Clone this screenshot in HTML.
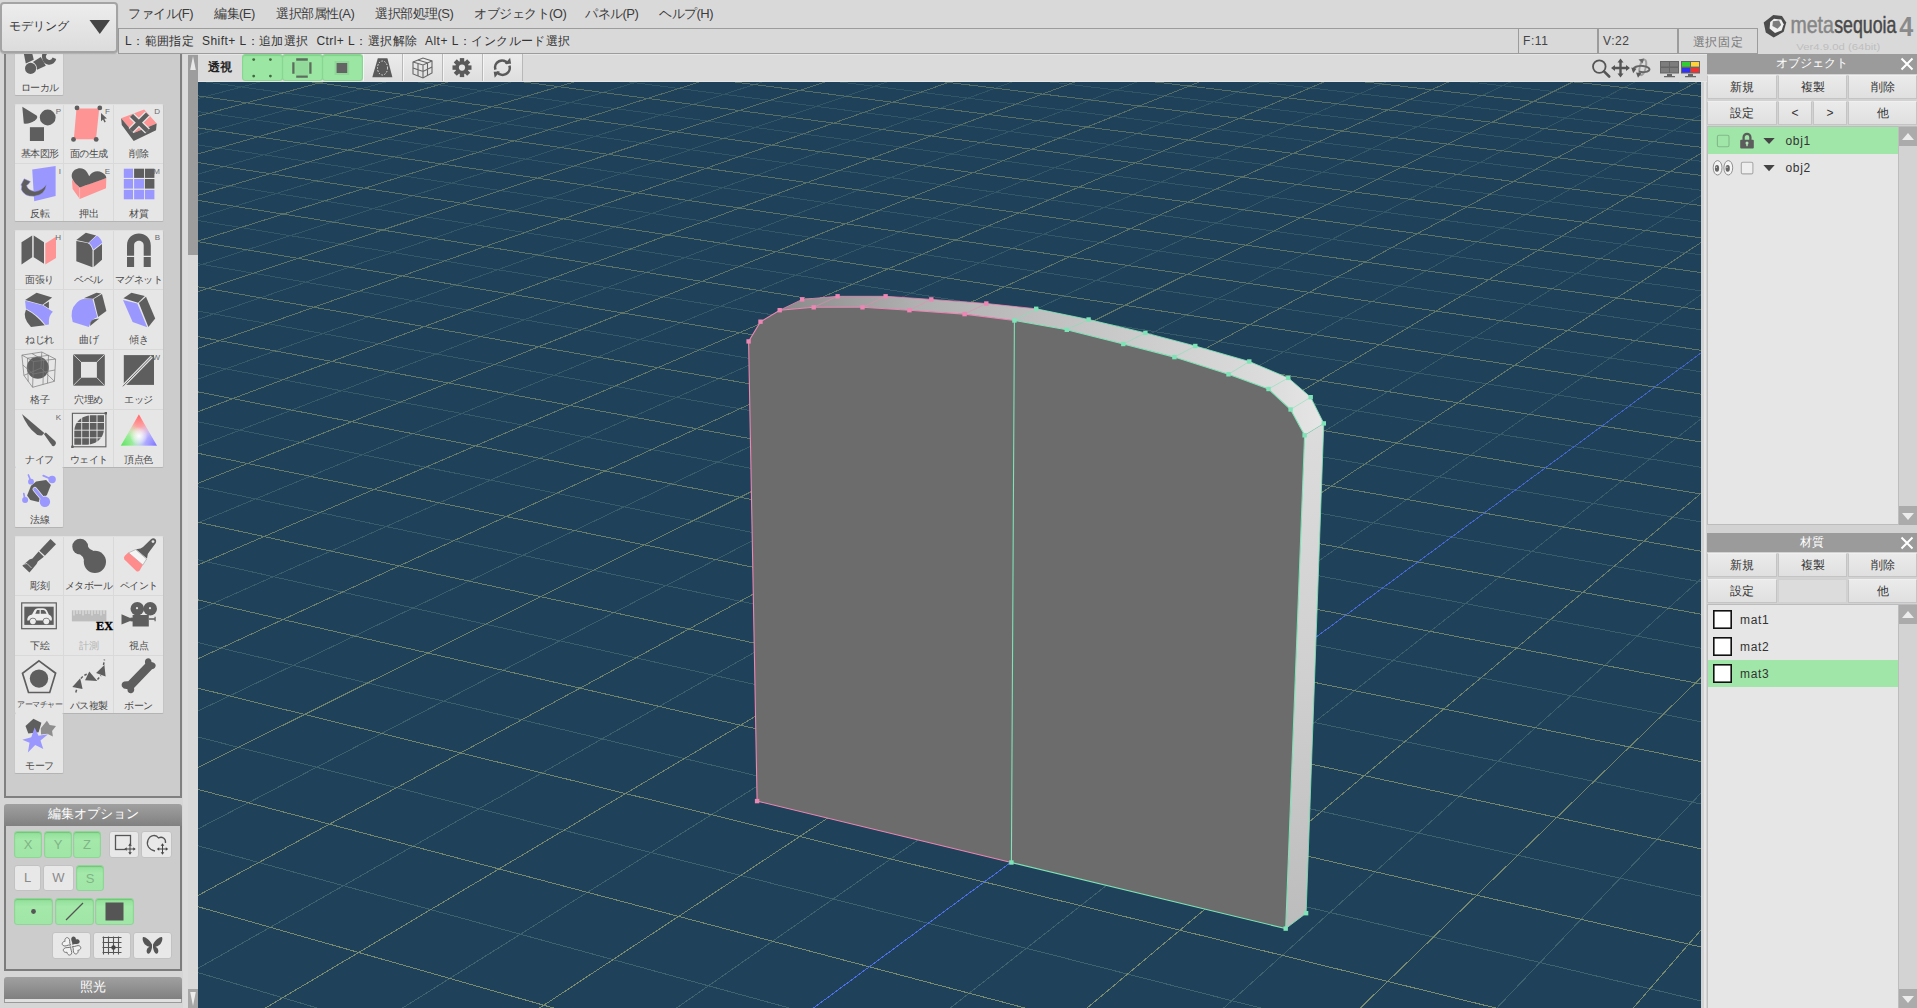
<!DOCTYPE html>
<html lang="ja">
<head>
<meta charset="utf-8">
<title>metasequoia4</title>
<style>
*{box-sizing:border-box;margin:0;padding:0}
html,body{width:1917px;height:1008px;overflow:hidden;background:#d4d4d4;font-family:"Liberation Sans",sans-serif;color:#333}
.a{position:absolute}
#top{left:0;top:0;width:1917px;height:54px;background:#d9d9d9}
#menu{left:117px;top:0;height:28px;width:1640px;font-size:13px;color:#3c3c3c}
#menu span{position:absolute;top:5px;white-space:nowrap;letter-spacing:-0.5px}
#status{left:118px;top:28px;width:1400px;border-left:1px solid #9c9c9c;height:26px;background:#d9d9d9;border-top:1px solid #9c9c9c;border-bottom:1px solid #9c9c9c;font-size:12px;color:#333}
#status span{position:absolute;left:6px;top:4px;white-space:pre;letter-spacing:0.45px}
.sbox{top:28px;height:26px;background:#d9d9d9;border:1px solid #9c9c9c;font-size:12px;color:#444;padding:5px 0 0 4px;letter-spacing:0.6px}
#mode{left:0;top:2px;width:118px;height:51px;border-radius:4px;background:linear-gradient(#ededed,#dcdcdc);border:2px solid #a4a4a4;box-shadow:0 1px 1px rgba(0,0,0,.2);font-size:12px;color:#333}
#left{left:0;top:53px;width:198px;height:955px;background:#d6d6d6;overflow:hidden}
.grp{background:#e6e6e6;border:1px solid #c4c4c4;border-top-color:#e0e0e0;border-left-color:#c8c8c8;border-bottom-color:#b4b4b4;border-radius:2px}
.tb{position:absolute;width:49px;height:60px;font-size:10px;color:#4a4a4a;text-align:center}
.tb .l{position:absolute;left:-6px;right:-6px;top:43px;white-space:nowrap;letter-spacing:-0.5px}
.tb .k{position:absolute;right:3px;top:3px;font-size:8px;color:#6a6a6a}
.tb svg{position:absolute;left:6px;top:1px;width:38px;height:38px;overflow:visible}
.vsep{position:absolute;width:1px;background:#d9d9d9}
.phead{height:22px;border-radius:3px 3px 0 0;background:linear-gradient(#a0a0a0,#929292 45%,#808080);color:#fff;font-size:13px;text-align:center;line-height:20px}
.gb{position:absolute;height:27px;border-radius:3px;background:linear-gradient(#90e098,#a4e8aa 30%,#a0e6a6);border:1px solid #8fd596;box-shadow:inset 0 1px 1px rgba(0,80,0,.2);color:#7fb486;font-size:13px;text-align:center;line-height:26px}
.wb{position:absolute;height:27px;border-radius:3px;background:#e8e8e8;border:1px solid #c2c2c2;color:#8a8a8a;font-size:13px;text-align:center;line-height:24px}
#vbar{left:198px;top:54px;width:1509px;height:28px;background:#dbdbdb;border-top:1px solid #e6e6e6;border-bottom:1px solid #e6e6e6}
.vb{position:absolute;top:-1px;width:40px;height:27px;background:linear-gradient(#ececec,#dedede);border-left:1px solid #f4f4f4;border-right:1px solid #b8b8b8}
.vbg{position:absolute;top:-1px;width:40.500px;height:27px;background:#9ae6a2;border:1px solid #88d692;border-radius:3px;box-shadow:inset 0 1px 1px #80d28a}
#view{left:198px;top:82px;width:1503px;height:926px;background:#1f4159;overflow:hidden}
#right{left:1701px;top:53px;width:216px;height:955px;background:#d2d2d2}
.rhead{left:1707px;width:210px;height:20px;background:#9b9b9b;color:#fff;font-size:12px;text-align:center;line-height:19px}
.rb{position:absolute;height:24px;background:linear-gradient(#ebebeb,#e0e0e0);border:1px solid #c4c4c4;border-top-color:#f0f0f0;font-size:12px;color:#333;text-align:center;line-height:22px}
.list{left:1707px;width:191px;background:#e6e6e6;border-left:1px solid #bcbcbc;border-top:1px solid #bcbcbc}
.sel{background:#a0e6a8}
.sbar{left:1898px;width:19px;background:#d3d3d3;border-left:1px solid #bdbdbd}
.sarr{position:absolute;left:0;width:18px;height:19px;background:#ababab}
.row{position:absolute;left:1px;width:189px;height:27px;font-size:12px;color:#333}
</style>
</head>
<body>
<div id="left" class="a">
<div class="a" style="left:4px;top:0;width:178px;height:745px;background:#cccccc;border:2px solid #808080;border-top:none"></div>
<div class="a grp" style="left:14px;top:-20px;width:50px;height:63px"></div>
<div class="tb" style="left:15px;top:-17px"><svg viewBox="0 0 38 38"><g fill="#5e5e5e"><path d="M2.300 14L10.700 14L12.750 22.800L4.800 26.600Z"/><circle cx="9.600" cy="31.400" r="5.600"/><path d="M11.900 24.900L19.800 19.900L24.800 28.700L16.100 32.800Q16.300 27.500 11.900 24.900Z"/><path d="M28.200 20.700m-7.100 0a7.100 7.100 0 0 0 14.100 1.200l-3.600 -1.400a3.400 3.400 0 1 1 -2.300 -4.300l1.300 -3.500a7.100 7.100 0 0 0 -9.500 8z"/></g></svg><span class="l" style="top:44.500px">ローカル</span></div>
<div class="a grp" style="left:14px;top:51px;width:150px;height:118px"></div><div class="vsep" style="left:63px;top:52px;height:116px"></div><div class="vsep" style="left:113px;top:52px;height:116px"></div><div class="vsep" style="left:15px;top:110px;width:148px;height:1px"></div>
<div class="tb" style="left:15px;top:51px"><svg viewBox="0 0 38 38"><g fill="#5e5e5e"><path d="M1.300 1.800L15.600 10.600Q17.400 12.600 14.200 15.300Q9 19.200 2.800 18.600Z"/><circle cx="26.700" cy="12.500" r="7.900"/><rect x="8.900" y="22.200" width="14.100" height="13.800"/></g></svg><span class="k">P</span><span class="l">基本図形</span></div>
<div class="tb" style="left:64px;top:51px"><svg viewBox="0 0 38 38"><path d="M6.500 3.600L29.200 3.600L26 34.200L3.800 34.200Z" fill="#ff9494"/><g fill="#5e5e5e"><circle cx="7" cy="2.900" r="2.400"/><circle cx="29.800" cy="2.900" r="2.400"/><circle cx="3.500" cy="34.400" r="2.400"/><circle cx="26.200" cy="34.400" r="2.400"/><path d="M31 8l0 8.200l2 -1.800l1.500 3l1.300 -0.700l-1.500 -2.900l2.600 -0.300z"/></g></svg><span class="k">F</span><span class="l">面の生成</span></div>
<div class="tb" style="left:114px;top:51px"><svg viewBox="0 0 38 38"><path d="M1.100 13.300L24.100 4.500L36.700 18.400L13.700 27.900Z" fill="#ff9494"/><path d="M1.100 13.300L13.700 27.900L36.700 18.400L36 25.200L13.700 35.900L1.800 20Z" fill="#5e5e5e"/><g stroke="#e5e5e5" stroke-width="6.800" stroke-linecap="butt"><path d="M11.500 10.500L27.500 26M27.500 9L11 25.500"/></g><g stroke="#5e5e5e" stroke-width="4.400"><path d="M11.500 10.500L27.500 26M27.500 9L11 25.500"/></g></svg><span class="k">D</span><span class="l">削除</span></div>
<div class="tb" style="left:15px;top:111px"><svg viewBox="0 0 38 38"><path d="M11.200 4.500L34.600 1L34.600 31.100L13.200 36.300Z" fill="#9a98ff"/><path d="M25.500 19.200Q24.500 30 13 31.300Q3 31.500 0.300 24.500L0.800 20.800L-0.200 20.200L3.200 13.800L9.400 16.600L7.600 19L5.600 20.600Q7 25.500 13.600 26.400Q21 26 25.500 19.200Z" fill="#5e5e5e" stroke="#9a98ff" stroke-width="0.500"/></svg><span class="k">I</span><span class="l">反転</span></div>
<div class="tb" style="left:64px;top:111px"><svg viewBox="0 0 38 38"><path d="M1.900 14.500L9.500 22.500L36.300 13L36 23.200L9.800 33.900L2.600 24Z" fill="#ff9494"/><path d="M9.600 22.600V33.600" stroke="#ffd0d0" stroke-width="0.600"/><path d="M9.800 22.400C4 17.500 1 13.500 1.800 9.500C3 4 9.500 2 14 4.200C16.500 5.500 18 8.500 19.200 11.200C21.500 6.500 27.500 5.200 31.500 7.200C34.500 8.800 36.300 10.500 36.300 13C28 16 17 20 9.800 22.400Z" fill="#5e5e5e"/></svg><span class="k">E</span><span class="l">押出</span></div>
<div class="tb" style="left:114px;top:111px"><svg viewBox="0 0 38 38"><g fill="#9a98ff"><rect x="3.800" y="3.700" width="9.200" height="9.200"/><rect x="3.800" y="14" width="9.200" height="9.600"/><rect x="14.100" y="14" width="9.900" height="9.600"/><rect x="3.800" y="24.800" width="9.200" height="9.500"/><rect x="14.100" y="24.800" width="9.900" height="9.500"/><rect x="24.900" y="24.800" width="9.500" height="9.500"/></g><g fill="#5e5e5e"><rect x="14.100" y="3.700" width="9.900" height="9.200"/><rect x="24.900" y="3.700" width="9.500" height="9.200"/><rect x="24.900" y="14" width="9.500" height="9.600"/></g></svg><span class="k">M</span><span class="l">材質</span></div>
<div class="a grp" style="left:14px;top:177px;width:150px;height:238px"></div><div class="a grp" style="left:14px;top:414px;width:50px;height:61px;border-top:none"></div><div class="vsep" style="left:63px;top:178px;height:236px"></div><div class="vsep" style="left:113px;top:178px;height:236px"></div><div class="vsep" style="left:15px;top:236px;width:148px;height:1px"></div><div class="vsep" style="left:15px;top:296px;width:148px;height:1px"></div><div class="vsep" style="left:15px;top:356px;width:148px;height:1px"></div>
<div class="tb" style="left:15px;top:177px"><svg viewBox="0 0 38 38"><path d="M0.500 11.300L11.200 4.500L11.200 26.300L0.500 33.500Z" fill="#5e5e5e"/><path d="M12.700 4.500L23 11.300L23 32.700L12.700 26.300Z" fill="#5e5e5e"/><path d="M24.300 12.500L35 5.700L35 27.100L24.300 33.500Z" fill="#ff9494"/></svg><span class="k">H</span><span class="l">面張り</span></div>
<div class="tb" style="left:64px;top:177px"><svg viewBox="0 0 38 38"><path d="M6.300 8.900L15.800 1.800L26.100 4.500L18.500 11.700Z" fill="#5e5e5e"/><path d="M26.900 4.700Q31 7 32.200 11.700L23.500 18.500Q22 13.800 18.900 11.700Z" fill="#9a98ff"/><path d="M6.300 10.100L17.400 12.100Q21.500 14.500 22.500 19.200L22.500 36.300L6.300 30.300Z" fill="#5e5e5e"/><path d="M23.700 19.600L32 12.900L32 28.700L23.700 35.900Z" fill="#5e5e5e"/></svg><span class="l">ベベル</span></div>
<div class="tb" style="left:114px;top:177px"><svg viewBox="0 0 38 38"><path d="M7 24.800V14.500C7 -1.400 30.800 -1.400 30.800 14.500V24.800H23.700V14.500C23.700 8.300 14.100 8.300 14.100 14.500V24.800Z" fill="#5e5e5e"/><path d="M7 26.100H14.100V35.900H7ZM23.700 26.100H30.800V35.900H23.700Z" fill="#5e5e5e"/></svg><span class="k">B</span><span class="l">マグネット</span></div>
<div class="tb" style="left:15px;top:237px"><svg viewBox="0 0 38 38"><path d="M4.100 8.900L15.600 1.800L31.100 6.500L21.500 13.700Z" fill="#5e5e5e"/><path d="M22.300 14L27.900 10.500L27.900 17.600Z" fill="#5e5e5e"/><path d="M4.100 9.700L21.500 14.200L31.900 20.800Q27 25 27.900 33.500L24.700 33.900Q17 24 4.900 17.600Z" fill="#9a98ff"/><path d="M5 18.500Q15.500 24 23.800 34.300L10 35.900Q1 27 5 18.500Z" fill="#5e5e5e"/></svg><span class="l">ねじれ</span></div>
<div class="tb" style="left:64px;top:237px"><svg viewBox="0 0 38 38"><path d="M13 8.100L22.500 8.100L27.300 26.300Q21 28 18.900 35.900L2.700 31.100Q-1 19 7 11.500Q9.500 9 13 8.100Z" fill="#9a98ff"/><path d="M13.800 7.300L26.500 1.800L31.200 2.600L22.900 7.700Z" fill="#5e5e5e"/><path d="M23.700 8.100L32 2.900L36.400 20L28.100 25.900Z" fill="#5e5e5e"/><path d="M20.300 31.800Q21.500 29 24.100 28.300L29.200 27.500L20.100 35.100Z" fill="#5e5e5e"/></svg><span class="l">曲げ</span></div>
<div class="tb" style="left:114px;top:237px"><svg viewBox="0 0 38 38"><path d="M3 8.900L17.300 12.500L27.200 36.300L12.600 31.100Z" fill="#9a98ff"/><path d="M3.400 7.300L11.400 1.800L24.800 4.900L18.100 11.700Z" fill="#5e5e5e"/><path d="M18.900 12.100L26 5.700L35.200 27.500L28.400 35.900Z" fill="#5e5e5e"/></svg><span class="l">傾き</span></div>
<div class="tb" style="left:15px;top:297px"><svg viewBox="0 0 38 38"><circle cx="16.800" cy="16.800" r="11" fill="#5e5e5e"/><g fill="none" stroke="#7a7a7a" stroke-width="0.700"><path d="M0.900 4.100L20.800 1L34.600 8.100L33.400 30.300L11.600 36.300L2.900 24.400Z"/><path d="M0.900 4.100L12.500 10.500L11.600 36.300M12.500 10.500L34.600 8.100M6.500 7.200L27.500 4.300M27.500 4.300L26.500 32.200M6.500 7.200L7.200 30.500M1.900 14L12 23L34 19M22.500 9.400L22 33.500M11 2.600L23 9.300M2.900 24.400L20 17L33.400 30.300M20.800 1L20 17"/></g></svg><span class="l">格子</span></div>
<div class="tb" style="left:64px;top:297px"><svg viewBox="0 0 38 38"><rect x="3.100" y="3.300" width="31.700" height="31.400" fill="#5e5e5e"/><rect x="11" y="10.900" width="15.900" height="15.800" fill="#e5e5e5"/><path d="M3.100 3.300L11 10.900M34.800 3.300L26.900 10.900M3.100 34.700L11 26.700M34.800 34.700L26.900 26.700" stroke="#e5e5e5" stroke-width="0.800"/></svg><span class="l">穴埋め</span></div>
<div class="tb" style="left:114px;top:297px"><svg viewBox="0 0 38 38"><rect x="3.800" y="4.100" width="30.200" height="29.800" fill="#5e5e5e"/><path d="M2.900 35.300L31.800 5.600" stroke="#e5e5e5" stroke-width="3"/><path d="M2.900 35.300L31.800 5.600" stroke="#5e5e5e" stroke-width="0.900"/></svg><span class="k">W</span><span class="l">エッジ</span></div>
<div class="tb" style="left:15px;top:357px"><svg viewBox="0 0 38 38"><path d="M0.900 2.900L23.300 22L21 24.500Q18 25 15.500 23.300Q6 16 0.900 2.900Z" fill="#5e5e5e"/><path d="M22.900 23L24.800 21.500L33.800 29.800Q36 32 34 34.300Q32.500 35.800 30.800 34.600Q30.500 33.200 29.300 32.300Z" fill="#5e5e5e"/></svg><span class="k">K</span><span class="l">ナイフ</span></div>
<div class="tb" style="left:64px;top:357px"><svg viewBox="0 0 38 38"><rect x="2.400" y="2.300" width="33.500" height="33.500" fill="none" stroke="#5e5e5e" stroke-width="1.100"/><path d="M4.300 33.800V21C4.300 9 14 4.300 22 4.300H34V17C34 29 24 33.800 16 33.800Z" fill="#5e5e5e"/><path d="M11.700 3V35M19.400 3V35M27 3V35M3 11.500H35M3 19.200H35M3 26.800H35" stroke="#e5e5e5" stroke-width="0.900"/><rect x="34.600" y="1" width="2.400" height="2.400" fill="#5e5e5e"/><rect x="1.200" y="34.600" width="2.400" height="2.400" fill="#5e5e5e"/></svg><span class="l">ウェイト</span></div>
<div class="tb" style="left:114px;top:357px"><svg viewBox="0 0 38 38"><defs><radialGradient id="vw" gradientUnits="userSpaceOnUse" cx="18.900" cy="25" r="9"><stop offset="0" stop-color="#fff" stop-opacity="0.950"/><stop offset="1" stop-color="#fff" stop-opacity="0"/></radialGradient><radialGradient id="vr" gradientUnits="userSpaceOnUse" cx="18.900" cy="4" r="26"><stop offset="0" stop-color="#ff6a6a"/><stop offset="0.45" stop-color="#ff8a8a" stop-opacity="0.800"/><stop offset="1" stop-color="#ffb0b0" stop-opacity="0"/></radialGradient><radialGradient id="vg" gradientUnits="userSpaceOnUse" cx="1" cy="34.500" r="26"><stop offset="0" stop-color="#5ae05a"/><stop offset="0.45" stop-color="#80e880" stop-opacity="0.800"/><stop offset="1" stop-color="#b0ffb0" stop-opacity="0"/></radialGradient><radialGradient id="vbl" gradientUnits="userSpaceOnUse" cx="37" cy="34.500" r="26"><stop offset="0" stop-color="#7a70ff"/><stop offset="0.45" stop-color="#9a94ff" stop-opacity="0.800"/><stop offset="1" stop-color="#c0c0ff" stop-opacity="0"/></radialGradient></defs><path d="M18.900 3.300L37.100 34.700L0.700 34.700Z" fill="#fff"/><path d="M18.900 3.300L37.100 34.700L0.700 34.700Z" fill="url(#vr)"/><path d="M18.900 3.300L37.100 34.700L0.700 34.700Z" fill="url(#vg)"/><path d="M18.900 3.300L37.100 34.700L0.700 34.700Z" fill="url(#vbl)"/><path d="M18.900 3.300L37.100 34.700L0.700 34.700Z" fill="url(#vw)"/></svg><span class="l">頂点色</span></div>
<div class="tb" style="left:15px;top:417px"><svg viewBox="0 0 38 38"><path d="M15.200 10.500L25.100 8.900L29.900 14L25.900 24L17.600 31.100L9.300 29.100L6.100 24.400L10 14.800Z" fill="#5e5e5e"/><g stroke="#e5e5e5" stroke-width="4.600" stroke-linecap="round"><path d="M13.800 18.200L23.900 30.500"/></g><circle cx="23.900" cy="30.700" r="6" fill="#e5e5e5"/><g stroke="#9a98ff" stroke-linecap="round"><path d="M13.800 18.200L23.900 30.500" stroke-width="3.200"/><path d="M31.100 8.500L22.200 4.600" stroke-width="1.700"/><path d="M10 10.500L7.400 4" stroke-width="1.700"/><path d="M4.100 29.100L2.800 22.600" stroke-width="1.700"/></g><g fill="#9a98ff"><circle cx="23.900" cy="30.700" r="5.200"/><circle cx="31.100" cy="8.500" r="3.700"/><circle cx="10" cy="10.700" r="2.900"/><circle cx="4.100" cy="29.100" r="3"/></g></svg><span class="l">法線</span></div>
<div class="a grp" style="left:14px;top:483px;width:150px;height:178px"></div><div class="a grp" style="left:14px;top:660px;width:50px;height:61px;border-top:none"></div><div class="vsep" style="left:63px;top:484px;height:176px"></div><div class="vsep" style="left:113px;top:484px;height:176px"></div><div class="vsep" style="left:15px;top:542px;width:148px;height:1px"></div><div class="vsep" style="left:15px;top:602px;width:148px;height:1px"></div>
<div class="tb" style="left:15px;top:483px"><svg viewBox="0 0 38 38"><path d="M29.500 1.900L35 7.300L23.900 18.800L18.400 13.700Z" fill="#5e5e5e"/><path d="M17.600 14.600L22.900 19.700L16.800 24.600L15.600 27.100L8.500 35.500L1.300 28.700L8.500 22.400L11.500 21.500Z" fill="#5e5e5e"/><path d="M2.700 27.300L6 26.500L10.500 31" stroke="#e5e5e5" stroke-width="0.700" fill="none"/></svg><span class="l">彫刻</span></div>
<div class="tb" style="left:64px;top:483px"><svg viewBox="0 0 38 38"><circle cx="10.200" cy="9.700" r="7.900" fill="#5e5e5e"/><circle cx="24.900" cy="24.800" r="11.100" fill="#5e5e5e"/><path d="M10.100 17.500Q13.100 19.150 13.970 22.900L23.270 13.800Q19.550 12.850 17.980 9.800Z" fill="#5e5e5e"/></svg><span class="l">メタボール</span></div>
<div class="tb" style="left:114px;top:483px"><svg viewBox="0 0 38 38"><path d="M34.500 1.600Q37 3 35.800 6L29.500 14.500L27.800 17L27 21.500L16 12.200L20.500 11.500L23 10L31 2.300Q32.800 0.800 34.500 1.600Z" fill="#5e5e5e"/><circle cx="33" cy="4.600" r="1.400" fill="#e5e5e5"/><path d="M15.600 12.600L26.600 22L22.800 28L8.500 15.800Z" fill="#f4f4f4" stroke="#8a8a8a" stroke-width="0.500"/><path d="M8.300 15.600L22.800 28L19.500 33.800Q18 35.200 16.500 34.200L4.400 22.500Q3.300 20.500 4.600 19Z" fill="#ff8c8c"/></svg><span class="l">ペイント</span></div>
<div class="tb" style="left:15px;top:543px"><svg viewBox="0 0 38 38"><rect x="0.700" y="5.900" width="34.600" height="25.800" fill="none" stroke="#5e5e5e" stroke-width="1.200"/><rect x="3.300" y="9.700" width="29.400" height="18.200" fill="#5e5e5e"/><path d="M6.200 23.500Q6 18.500 11 17.500L13.500 13Q14.500 11.300 17 11.300H22Q24.500 11.300 25.800 13.200L27.800 17.600Q31.500 19 30.800 23.500H28.800A3.600 3.600 0 0 0 21.800 23.500H15.400A3.600 3.600 0 0 0 8.400 23.500Z" fill="#ececec"/><circle cx="11.900" cy="24.300" r="2.900" fill="#ececec"/><circle cx="25.300" cy="24.300" r="2.900" fill="#ececec"/><path d="M14.300 16.800L16 13H18.600V16.800ZM19.800 13H22.500Q23.800 13.200 24.500 14.500L25.500 16.800H19.800Z" fill="#5e5e5e"/></svg><span class="l">下絵</span></div>
<div class="tb" style="left:64px;top:543px;color:#b4b4b4"><svg viewBox="0 0 38 38"><rect x="1.900" y="13.300" width="34.500" height="11.100" fill="#bdbdbd"/><path d="M4 13.300V18.500M7 13.300V17M10 13.300V17M13 13.300V18.500M16 13.300V17M19 13.300V17M22 13.300V18.500M25 13.300V17M28 13.300V17M31 13.300V18.500M34 13.300V17" stroke="#e4e4e4" stroke-width="1.100"/><text x="26" y="32.600" font-family="Liberation Serif, serif" font-weight="bold" font-size="13.500" fill="#000" textLength="17" lengthAdjust="spacingAndGlyphs" stroke="#000" stroke-width="0.400">EX</text></svg><span class="l">計測</span></div>
<div class="tb" style="left:114px;top:543px"><svg viewBox="0 0 38 38"><g fill="#5e5e5e"><circle cx="17.300" cy="11.700" r="6.800"/><circle cx="30.200" cy="11.700" r="6.800"/><rect x="12.600" y="18" width="16.200" height="11.500"/><path d="M1.500 17.200L11.400 21.500V23.500L1.500 27.500Z"/><rect x="10.500" y="20.600" width="3" height="3.800"/><path d="M28.800 21.300H34.500V19.800H35.700V24.300H34.500V22.800H28.800Z"/></g><circle cx="17" cy="11.200" r="1.100" fill="#e5e5e5"/><circle cx="30" cy="11.200" r="1.100" fill="#e5e5e5"/></svg><span class="l">視点</span></div>
<div class="tb" style="left:15px;top:603px;font-size:8px"><svg viewBox="0 0 38 38"><path d="M18 3.900L34.600 16.200L28.700 35.500L7.500 35.500L1.500 16.200Z" fill="none" stroke="#5e5e5e" stroke-width="1.700"/><circle cx="18" cy="21.600" r="9.200" fill="#5e5e5e"/></svg><span class="l">アーマチャー</span></div>
<div class="tb" style="left:64px;top:603px"><svg viewBox="0 0 38 38"><g fill="#5e5e5e"><path d="M2.300 29.900L10.200 21.200L12.600 31.900Z"/><path d="M15 23.200L19.300 14.400L27.300 24Z"/><path d="M26.100 16L34.400 8.100L35.600 19.600Z"/></g><path d="M5.800 35.500Q7 31 8.500 28M11 21.500Q14 17.500 18.500 17M27.500 22.500L31 18.500M33.500 8L34.500 2.500" stroke="#5e5e5e" stroke-width="1.500" stroke-dasharray="2.600 2" fill="none"/></svg><span class="l">パス複製</span></div>
<div class="tb" style="left:114px;top:603px"><svg viewBox="0 0 38 38"><path d="M8.200 24.200L25.200 6.800Q24.200 3 27 1.600Q29.800 0.500 31.200 3.200L31.500 5Q35.500 5.500 35.700 8.500Q35.600 11.500 32 12.200L14 31Q15 34.500 12 36Q9 37 7.800 34.500L7.300 32Q3.500 32.300 1.900 29.500Q0.800 26 4.200 24.600Q6.300 24 8.200 24.200Z" fill="#5e5e5e"/></svg><span class="l">ボーン</span></div>
<div class="tb" style="left:15px;top:663px"><svg viewBox="0 0 38 38"><path d="M12.400 1.800L20.400 5.700L17.600 15.200L7.300 16.400L4.500 8.900Z" fill="#5e5e5e"/><path d="M25.900 3.700L28.700 8.100L35 8.900L31.100 14L31.900 19.600L26.300 16.800L20 17.500L19.800 11.200Z" fill="#8e8e8e"/><path d="M13.600 10.500L17.500 18.800L27.100 17.200L19.500 23.500L22.300 31.900L14.200 28L6.900 35.500L8.500 25.800L1.300 22.800L10.300 20.200Z" fill="#9a98ff"/></svg><span class="l">モーフ</span></div>
<div class="a" style="left:183px;top:0;width:5px;height:955px;background:#dcdcdc"></div>
<div class="a" style="left:188px;top:0;width:10px;height:955px;background:#d9d9d9"></div>
<div class="a" style="left:188px;top:2px;width:10px;height:200px;background:#9d9d9d"></div>
<svg class="a" style="left:188px;top:2px" width="10" height="16" viewBox="0 0 10 16"><path d="M5 1L7.800 15H2.200Z" fill="#e8e8e8"/></svg>
<div class="a" style="left:188px;top:936px;width:10px;height:19px;background:#a6a6a6"></div>
<svg class="a" style="left:188px;top:938px" width="10" height="16" viewBox="0 0 10 16"><path d="M2.200 1H7.800L5 15Z" fill="#ececec"/></svg>
<div class="a phead" style="left:4px;top:751px;width:178px">編集オプション</div>
<div class="a" style="left:4px;top:773px;width:178px;height:145px;background:#cccccc;border:2px solid #7c7c7c;border-top:none"></div>
<div class="gb" style="left:14px;top:778px;width:28px;height:27px">X</div><div class="gb" style="left:44px;top:778px;width:28px;height:27px">Y</div><div class="gb" style="left:73px;top:778px;width:28px;height:27px">Z</div>
<div class="wb" style="left:109px;top:778px;width:30px;height:27px"><svg width="28" height="25" viewBox="0 0 28 25"><rect x="5.500" y="3.500" width="15" height="14" fill="none" stroke="#555" stroke-width="1.300"/><path d="M20 12.500v9M15.500 17h9" stroke="#e8e8e8" stroke-width="3"/><path d="M20 13v8M16 17h8" stroke="#444" stroke-width="1"/><path d="M20 11.300l1.800 2.400h-3.600zM20 22.700l1.800 -2.400h-3.600zM14.300 17l2.400 -1.800v3.600zM25.700 17l-2.400 -1.800v3.600z" fill="#444"/></svg></div><div class="wb" style="left:141px;top:778px;width:31px;height:27px"><svg width="29" height="25" viewBox="0 0 29 25"><path d="M13 19C7 18 4 13 6 8C8 3 14 2 16.500 6C20 4 24 6.500 23.500 11" fill="none" stroke="#555" stroke-width="1.300"/><path d="M20.500 12.500v9M16 17h9" stroke="#e8e8e8" stroke-width="3"/><path d="M20.500 13v8M16.500 17h8" stroke="#444" stroke-width="1"/><path d="M20.500 11.300l1.800 2.400h-3.600zM20.500 22.700l1.800 -2.400h-3.600zM14.800 17l2.400 -1.800v3.600zM26.200 17l-2.400 -1.800v3.600z" fill="#444"/></svg></div>
<div class="wb" style="left:14px;top:812px;width:27px;height:26px">L</div><div class="wb" style="left:43px;top:812px;width:31px;height:26px">W</div><div class="gb" style="left:76px;top:812px;width:28px;height:26px">S</div>
<div class="gb" style="left:14px;top:845px;width:39px;height:27px"><svg width="37" height="25" viewBox="0 0 37 25"><circle cx="18.500" cy="12.500" r="2.400" fill="#555"/></svg></div><div class="gb" style="left:55px;top:845px;width:39px;height:27px"><svg width="37" height="25" viewBox="0 0 37 25"><path d="M10 21L27 4" stroke="#555" stroke-width="1.200"/></svg></div><div class="gb" style="left:95px;top:845px;width:39px;height:27px"><svg width="37" height="25" viewBox="0 0 37 25"><rect x="9.500" y="3.500" width="18" height="18" fill="#555"/></svg></div>
<div class="wb" style="left:52px;top:879px;width:39px;height:27px"><svg width="37" height="25" viewBox="0 0 37 25"><g transform="translate(18.500 12.800)"><path d="M0 -1.200C-0.800 -3.800 -4.600 -4.200 -4.600 -7C-4.600 -9.300 -1.500 -10 0 -7.800C1.500 -10 4.600 -9.300 4.600 -7C4.600 -4.200 0.800 -3.800 0 -1.200Z" fill="#555" transform="rotate(35)"/><g fill="#f2f2f2" stroke="#666" stroke-width="0.800"><path d="M0 -1.200C-0.800 -3.800 -4.600 -4.200 -4.600 -7C-4.600 -9.300 -1.500 -10 0 -7.800C1.500 -10 4.600 -9.300 4.600 -7C4.600 -4.200 0.800 -3.800 0 -1.200Z" transform="rotate(125)"/><path d="M0 -1.200C-0.800 -3.800 -4.600 -4.200 -4.600 -7C-4.600 -9.300 -1.500 -10 0 -7.800C1.500 -10 4.600 -9.300 4.600 -7C4.600 -4.200 0.800 -3.800 0 -1.200Z" transform="rotate(215)"/><path d="M0 -1.200C-0.800 -3.800 -4.600 -4.200 -4.600 -7C-4.600 -9.300 -1.500 -10 0 -7.800C1.500 -10 4.600 -9.300 4.600 -7C4.600 -4.200 0.800 -3.800 0 -1.200Z" transform="rotate(305)"/></g></g></svg></div><div class="wb" style="left:93px;top:879px;width:38px;height:27px"><svg width="36" height="25" viewBox="0 0 36 25"><path d="M9.500 3.500v18M14.500 3.500v18M19.500 3.500v18M24.500 3.500v18M8.500 4.500h19M8.500 9.500h19M8.500 14.500h19M8.500 19.500h19" stroke="#555" stroke-width="1.100" fill="none"/><circle cx="19.500" cy="14.500" r="2.200" fill="#444"/></svg></div><div class="wb" style="left:133px;top:879px;width:39px;height:27px"><svg width="37" height="25" viewBox="0 0 37 25"><path d="M18 11.500C15 6 10 3 8.800 4.500C8 7 10 13 15.500 13.800C12 15 11.800 20.500 14.500 20.800C16.500 20.500 17.500 17 18 14.500ZM19 11.500C22 6 27 3 28.200 4.500C29 7 27 13 21.500 13.800C25 15 25.200 20.500 22.500 20.800C20.500 20.500 19.500 17 19 14.500Z" fill="#555"/></svg></div>
<div class="a phead" style="left:4px;top:924px;width:178px">照光</div>
<div class="a" style="left:4px;top:946px;width:178px;height:4px;background:#e0e0e0;border:1px solid #9a9a9a;border-top:none"></div>
</div>
<div id="top" class="a">
 <div id="menu" class="a">
  <span style="left:11px">ファイル(F)</span>
  <span style="left:97px">編集(E)</span>
  <span style="left:159px">選択部属性(A)</span>
  <span style="left:258px">選択部処理(S)</span>
  <span style="left:357px">オブジェクト(O)</span>
  <span style="left:468px">パネル(P)</span>
  <span style="left:542px">ヘルプ(H)</span>
 </div>
 <div id="status" class="a"><span>L：範囲指定  Shift+ L：追加選択  Ctrl+ L：選択解除  Alt+ L：インクルード選択</span></div>
 <div class="a sbox" style="left:1518px;width:80px">F:11</div>
 <div class="a sbox" style="left:1598px;width:80px">V:22</div>
 <div class="a sbox" style="left:1678px;width:80px;color:#777;text-align:center;padding-left:0">選択固定</div>
 <div id="mode" class="a"><span class="a" style="left:7px;top:14px">モデリング</span>
  <svg class="a" style="left:87px;top:15px" width="22" height="16" viewBox="0 0 22 16"><path d="M0.5 1H21L10.8 15Z" fill="#444"/></svg>
 </div>
 <!-- logo -->
 <svg class="a" style="left:1757px;top:0" width="160" height="56" viewBox="0 0 160 56">
  <path d="M16.300 15L25 15.900L29.200 22.500L26.700 31.700L16.700 37.600L8.800 32.600L6.700 22.500Z" fill="#4b4b4b"/>
  <path d="M17 18.800L24.200 19.600L26.700 24.200L24.600 30.500L18 33L12.600 28.400L13.200 22Z" fill="#f0f0f0"/>
  <path d="M15.900 21.300L22.100 20.500L24.200 25L20.500 28.800L15.400 25.900Z" fill="#7c7c7c"/>
  <text x="33.400" y="33.400" font-family="Liberation Sans, sans-serif" font-size="24" fill="#868686" stroke="#868686" stroke-width="0.500" textLength="43.400" lengthAdjust="spacingAndGlyphs">meta</text>
  <text x="77.200" y="33.400" font-family="Liberation Sans, sans-serif" font-size="24" fill="#484848" stroke="#484848" stroke-width="0.500" textLength="62.200" lengthAdjust="spacingAndGlyphs">sequoia</text>
  <text x="142.300" y="35.900" font-family="Liberation Sans, sans-serif" font-size="27.500" font-weight="bold" fill="#8a8a8a" textLength="14" lengthAdjust="spacingAndGlyphs">4</text>
  <text x="39.200" y="50" font-family="Liberation Sans, sans-serif" font-size="9.200" fill="#bebebe" textLength="84" lengthAdjust="spacingAndGlyphs">Ver4.9.0d (64bit)</text>
 </svg>
</div>
<div id="view" class="a">
<svg class="a" style="left:0;top:0" width="1503" height="926" viewBox="0 0 1503 926">
<path d="M0.0 16.6L61.8 0.0M0.0 52.7L187.6 0.0M0.0 92.2L313.2 0.0M0.0 135.7L438.7 -0.0M0.0 183.8L564.0 0.0M0.0 237.3L689.1 0.0M0.0 297.1L814.1 0.0M0.0 364.4L939.0 0.0M0.0 440.8L1063.6 0.0M0.0 528.1L1188.2 0.0M0.0 629.0L1312.5 0.0M0.0 746.9L1436.7 0.0M0.0 886.3L1503.0 32.8M204.5 926.0L1503.0 113.7M478.6 926.0L1503.0 212.7M752.3 926.0L1503.0 336.8M1025.7 926.0L1503.0 496.8M1298.8 926.0L1503.0 711.1M0.0 890.6L119.3 926.0M0.0 763.8L591.4 926.0M0.0 655.0L1062.6 926.0M0.0 560.6L1503.0 918.9M0.0 477.8L1503.0 814.3M0.0 404.8L1503.0 722.0M0.0 339.8L1503.0 639.8M0.0 281.6L1503.0 566.2M-0.0 229.1L1503.0 499.9M0.0 181.7L1503.0 439.9M0.0 138.5L1503.0 385.3M0.0 99.1L1503.0 335.5M0.0 62.9L1503.0 289.7M0.0 29.6L1503.0 247.7M8.1 0.0L1503.0 208.8M219.8 0.0L1503.0 172.8M431.1 0.0L1503.0 139.4M641.9 0.0L1503.0 108.2M852.3 0.0L1503.0 79.2M1062.2 0.0L1503.0 51.9M1271.7 0.0L1503.0 26.4M1480.8 0.0L1503.0 2.5" stroke="#3f636e" stroke-width="1" fill="none" shape-rendering="crispEdges"/>
<path d="M0.0 34.2L124.7 0.0M0.0 72.0L250.4 0.0M0.0 113.4L376.0 0.0M-0.0 159.1L501.4 -0.0M0.0 209.8L626.6 0.0M0.0 266.3L751.7 0.0M0.0 329.7L876.6 0.0M-0.0 401.3L1001.3 0.0M0.0 482.9L1125.9 0.0M0.0 576.7L1250.4 0.0M0.0 685.6L1374.6 0.0M0.0 813.5L1498.8 0.0M67.4 926.0L1503.0 71.3M341.6 926.0L1503.0 160.5M889.1 926.0L1503.0 411.4M1162.3 926.0L1503.0 595.6M1435.2 926.0L1503.0 848.0M0.0 824.7L355.5 926.0M0.0 707.4L827.1 926.0M0.0 606.2L1297.7 926.0M0.0 517.9L1503.0 865.0M0.0 440.2L1503.0 766.8M-0.0 371.3L1503.0 679.7M0.0 309.9L1503.0 602.0M0.0 254.7L1503.0 532.2M0.0 204.8L1503.0 469.2M0.0 159.6L1503.0 412.0M0.0 118.4L1503.0 359.9M0.0 80.6L1503.0 312.1M0.0 45.9L1503.0 268.3M0.0 13.9L1503.0 227.9M114.0 0.0L1503.0 190.5M325.5 0.0L1503.0 155.8M536.5 -0.0L1503.0 123.5M747.2 0.0L1503.0 93.4M957.3 0.0L1503.0 65.3M1167.1 0.0L1503.0 39.0M1376.3 0.0L1503.0 14.3" stroke="#7a8c6e" stroke-width="1" fill="none" shape-rendering="crispEdges"/>
<path d="M615.5 926.0L1503.0 271.0" stroke="#4c6ee6" stroke-width="1" fill="none" shape-rendering="crispEdges"/>
<defs><linearGradient id="fade" x1="0" y1="0" x2="0" y2="1"><stop offset="0" stop-color="#1f4159" stop-opacity="0.42"/><stop offset="0.55" stop-color="#1f4159" stop-opacity="0.18"/><stop offset="1" stop-color="#1f4159" stop-opacity="0"/></linearGradient></defs><rect x="0" y="0" width="1503" height="926" fill="url(#fade)"/>
<defs><linearGradient id="tg" gradientUnits="userSpaceOnUse" x1="582" y1="0" x2="1126" y2="0"><stop offset="0" stop-color="#8a8a8a"/><stop offset="0.25" stop-color="#b0b0b0"/><stop offset="0.6" stop-color="#c8c8c8"/><stop offset="0.9" stop-color="#dcdcdc"/><stop offset="1" stop-color="#e6e6e6"/></linearGradient>
<linearGradient id="sg" gradientUnits="userSpaceOnUse" x1="0" y1="342" x2="0" y2="846"><stop offset="0" stop-color="#dcdcdc"/><stop offset="0.5" stop-color="#d0d0d0"/><stop offset="1" stop-color="#bcbcbc"/></linearGradient></defs>
<polygon points="559.1,719.1 550.6,259.4 562.5,239.7 581.7,228.2 615.7,225.3 664.5,225.3 711.4,228.2 766.6,232.1 816.4,238.5 868.8,247.8 925.3,262.0 976.4,275.1 1030.5,292.3 1070.5,307.0 1092.6,327.5 1106.6,353.3 1087.7,846.6 813.4,780.5" fill="#6c6c6c"/>
<polygon points="581.7,228.2 615.7,225.3 664.5,225.3 711.4,228.2 766.6,232.1 816.4,238.5 868.8,247.8 925.3,262.0 976.4,275.1 1030.5,292.3 1070.5,307.0 1092.6,327.5 1106.6,353.3 1125.8,341.4 1112.7,315.2 1090.3,295.9 1051.3,279.5 997.3,264.0 947.4,250.9 890.6,237.5 838.2,226.8 788.3,221.5 733.3,217.4 687.6,214.3 639.6,214.3 604.2,217.4" fill="url(#tg)"/>
<polygon points="1106.6,353.3 1125.8,341.4 1108.1,831.2 1087.7,846.6" fill="url(#sg)"/>
<path d="M813.4 780.5L559.1 719.1L550.6 259.4L562.5 239.7L581.7 228.2L615.7 225.3L664.5 225.3L711.4 228.2L766.6 232.1L816.4 238.5" stroke="#ec86b2" stroke-width="1.1" fill="none"/>
<path d="M581.7 228.2L604.2 217.4L639.6 214.3L687.6 214.3L733.3 217.4L788.3 221.5L838.2 226.8" stroke="#ec86b2" stroke-width="1" fill="none" opacity="0.8"/>
<path d="M615.7 225.3L639.6 214.3M664.5 225.3L687.6 214.3M711.4 228.2L733.3 217.4M766.6 232.1L788.3 221.5" stroke="#ec86b2" stroke-width="0.8" fill="none" opacity="0.7"/>
<path d="M816.4 238.5L813.4 780.5L1087.7 846.6L1106.6 353.3L1106.6 353.3L1092.6 327.5L1070.5 307.0L1030.5 292.3L976.4 275.1L925.3 262.0L868.8 247.8L816.4 238.5" stroke="#7ee3b6" stroke-width="1.1" fill="none"/>
<path d="M838.2 226.8L890.6 237.5L947.4 250.9L997.3 264.0L1051.3 279.5L1090.3 295.9L1112.7 315.2L1125.8 341.4L1108.1 831.2L1087.7 846.6" stroke="#7ee3b6" stroke-width="1" fill="none" opacity="0.85"/>
<path d="M816.4 238.5L838.2 226.8M868.8 247.8L890.6 237.5M925.3 262.0L947.4 250.9M976.4 275.1L997.3 264.0M1030.5 292.3L1051.3 279.5M1070.5 307.0L1090.3 295.9M1092.6 327.5L1112.7 315.2M1106.6 353.3L1125.8 341.4" stroke="#7ee3b6" stroke-width="0.8" fill="none" opacity="0.7"/>
<rect x="556.9" y="716.9" width="4.4" height="4.4" fill="#ec86b2"/><rect x="548.4" y="257.2" width="4.4" height="4.4" fill="#ec86b2"/><rect x="560.3" y="237.5" width="4.4" height="4.4" fill="#ec86b2"/><rect x="579.5" y="226.0" width="4.4" height="4.4" fill="#ec86b2"/><rect x="613.5" y="223.1" width="4.4" height="4.4" fill="#ec86b2"/><rect x="662.3" y="223.1" width="4.4" height="4.4" fill="#ec86b2"/><rect x="709.2" y="226.0" width="4.4" height="4.4" fill="#ec86b2"/><rect x="764.4" y="229.9" width="4.4" height="4.4" fill="#ec86b2"/><rect x="602.0" y="215.2" width="4.4" height="4.4" fill="#ec86b2"/><rect x="637.4" y="212.1" width="4.4" height="4.4" fill="#ec86b2"/><rect x="685.4" y="212.1" width="4.4" height="4.4" fill="#ec86b2"/><rect x="731.1" y="215.2" width="4.4" height="4.4" fill="#ec86b2"/><rect x="786.1" y="219.3" width="4.4" height="4.4" fill="#ec86b2"/>
<rect x="811.2" y="778.3" width="4.4" height="4.4" fill="#7ee3b6"/><rect x="1085.5" y="844.4" width="4.4" height="4.4" fill="#7ee3b6"/><rect x="1105.9" y="829.0" width="4.4" height="4.4" fill="#7ee3b6"/><rect x="814.2" y="236.3" width="4.4" height="4.4" fill="#7ee3b6"/><rect x="866.6" y="245.6" width="4.4" height="4.4" fill="#7ee3b6"/><rect x="923.1" y="259.8" width="4.4" height="4.4" fill="#7ee3b6"/><rect x="974.2" y="272.9" width="4.4" height="4.4" fill="#7ee3b6"/><rect x="1028.3" y="290.1" width="4.4" height="4.4" fill="#7ee3b6"/><rect x="1068.3" y="304.8" width="4.4" height="4.4" fill="#7ee3b6"/><rect x="1090.4" y="325.3" width="4.4" height="4.4" fill="#7ee3b6"/><rect x="1104.4" y="351.1" width="4.4" height="4.4" fill="#7ee3b6"/><rect x="836.0" y="224.6" width="4.4" height="4.4" fill="#7ee3b6"/><rect x="888.4" y="235.3" width="4.4" height="4.4" fill="#7ee3b6"/><rect x="945.2" y="248.7" width="4.4" height="4.4" fill="#7ee3b6"/><rect x="995.1" y="261.8" width="4.4" height="4.4" fill="#7ee3b6"/><rect x="1049.1" y="277.3" width="4.4" height="4.4" fill="#7ee3b6"/><rect x="1088.1" y="293.7" width="4.4" height="4.4" fill="#7ee3b6"/><rect x="1110.5" y="313.0" width="4.4" height="4.4" fill="#7ee3b6"/><rect x="1123.6" y="339.2" width="4.4" height="4.4" fill="#7ee3b6"/>

</svg></div>
<div id="vbar" class="a">
 <span class="a" style="left:10px;top:4px;font-size:12px;font-weight:bold;color:#222">透視</span>
 <div class="vbg" style="left:44px"><svg width="38" height="25" viewBox="0 0 38 25"><g fill="#43683f"><circle cx="10.700" cy="4.600" r="1.400"/><circle cx="27.400" cy="4.600" r="1.400"/><circle cx="10.700" cy="21.100" r="1.400"/><circle cx="27.400" cy="21.100" r="1.400"/></g></svg></div>
 <div class="vbg" style="left:84px"><svg width="38" height="25" viewBox="0 0 38 25"><rect x="12.300" y="6.200" width="13.200" height="13.800" fill="#92da9a"/><path d="M13.200 4.500h11.600M13.200 21.600h11.600M10.400 7.200v11.600M27.400 7.200v11.600" stroke="#5d6d5d" stroke-width="2.300"/></svg></div>
 <div class="vbg" style="left:124px"><svg width="38" height="25" viewBox="0 0 38 25"><rect x="12.600" y="7" width="12.600" height="12" fill="#646464" stroke="#8fd897" stroke-width="2"/></svg></div>
 <div class="vb" style="left:165px"><svg width="38" height="27" viewBox="0 0 38 27"><path d="M13.800 4.300h9.600l5 18.900H8.300z" fill="#5a5a5a"/><ellipse cx="18.500" cy="14" rx="5" ry="7" fill="none" stroke="#e6e6e6" stroke-width="1" stroke-dasharray="1.500 1.500"/></svg></div>
 <div class="vb" style="left:205px"><svg width="38" height="27" viewBox="0 0 38 27"><g fill="none" stroke="#666" stroke-width="1.100" transform="translate(-1 0)"><path d="M10 8l10 -4l9 3v12l-9 5l-10 -4z"/><path d="M10 8l10 3l9 -4M20 11v13M15 5.900l10 3.200M10 14l10 3.500l9 -4.500M15 9.500v12.500M24.500 9.200v12.300"/></g></svg></div>
 <div class="vb" style="left:245px"><svg width="38" height="27" viewBox="0 0 38 27"><g transform="translate(18 13.600)"><g fill="#5a5a5a"><circle r="6.700"/><rect x="-2.200" y="-9.500" width="4.400" height="19"/><rect x="-2.200" y="-9.500" width="4.400" height="19" transform="rotate(45)"/><rect x="-2.200" y="-9.500" width="4.400" height="19" transform="rotate(90)"/><rect x="-2.200" y="-9.500" width="4.400" height="19" transform="rotate(135)"/></g><circle r="3.100" fill="#e6e6e6"/></g></svg></div>
 <div class="vb" style="left:285px"><svg width="38" height="27" viewBox="0 0 38 27"><g transform="translate(-0.600 0.200)"><g fill="none" stroke="#5a5a5a" stroke-width="2.600"><path d="M12 15.500a7 7 0 0 1 12.500 -6"/><path d="M26 11.500a7 7 0 0 1 -12.500 6"/></g><path d="M21.500 9.800l6.200 -0.300l-1 -6zM16.500 17.200l-6.200 0.300l1 6z" fill="#5a5a5a"/></g></svg></div>
 <!-- nav icons -->
 <svg class="a" style="left:1392px;top:1px" width="112" height="24" viewBox="0 0 112 24">
  <circle cx="9.300" cy="10.600" r="6.300" fill="none" stroke="#555" stroke-width="1.800"/><path d="M14 15.300l5.200 5.200" stroke="#555" stroke-width="2.600" stroke-linecap="round"/>
  <g transform="translate(30.500 12)" fill="#555"><path d="M-1.200 -6h2.400v12h-2.400zM-6 -1.200h12v2.400h-12z"/><path d="M0 -9.500l3 4h-6zM0 9.500l3 -4h-6zM-9.500 0l4 -3v6zM9.500 0l-4 -3v6z"/></g>
  <g transform="translate(51 12)" fill="none"><ellipse cx="1.500" cy="-1" rx="3" ry="8" transform="rotate(14)" stroke="#a0a0a0" stroke-width="1.900"/><path d="M-7.500 2.500C-8.500 -1 -3 -2.500 2 -2C7 -1.500 9.500 0.500 8 2.500C6 4.500 1 4.500 -2 3.500" stroke="#666" stroke-width="1.900"/><path d="M-9.800 -0.500L-4.500 0.800L-7.800 5.200Z" fill="#5a5a5a"/><path d="M-5 4.500L0.500 5.200L-3 9.800Z" fill="#5a5a5a"/><path d="M-2.500 -8.500L3 -9.500L1.500 -4.500Z" fill="#6a6a6a"/></g>
  <g transform="translate(70 5)"><rect width="19" height="12.500" fill="#666"/><path d="M1 1h8v4.600h-8zM10 1h8v4.600h-8zM1 6.900h8v4.600h-8zM10 6.900h8v4.600h-8z" fill="#7d7d7d"/><path d="M7 13h5v2h3v1.200h-11v-1.200h3z" fill="#666"/></g>
  <g transform="translate(91 5)"><rect width="19" height="12.500" fill="#666"/><path d="M1 1h8v4.600h-8z" fill="#32cd32"/><path d="M10 1h8v4.600h-8z" fill="#ffd23c"/><path d="M1 6.900h8v4.600h-8z" fill="#3232f0"/><path d="M10 6.900h8v4.600h-8z" fill="#f03232"/><path d="M7 13h5v2h3v1.200h-11v-1.200h3z" fill="#666"/></g>
 </svg>
</div>
<div id="right" class="a" style="top:82px;height:926px">
 <div class="a" style="left:3px;top:0;width:2px;height:926px;background:#e6e6e6"></div>
</div>
<!-- object panel -->
<div class="a rhead" style="top:54px">オブジェクト<svg class="a" style="right:3px;top:3px" width="14" height="14" viewBox="0 0 14 14"><path d="M1.500 1.500l11 11M12.500 1.500l-11 11" stroke="#fff" stroke-width="2"/></svg></div>
<div class="rb" style="left:1707px;top:75px;width:70px">新規</div><div class="rb" style="left:1778px;top:75px;width:69px">複製</div><div class="rb" style="left:1848px;top:75px;width:69px">削除</div>
<div class="rb" style="left:1707px;top:101px;width:70px">設定</div><div class="rb" style="left:1778px;top:101px;width:34px">&lt;</div><div class="rb" style="left:1813px;top:101px;width:34px">&gt;</div><div class="rb" style="left:1848px;top:101px;width:69px">他</div>
<div class="a list" style="top:126px;height:399px;border-bottom:1px solid #bcbcbc"></div>
<div class="a sel" style="left:1708px;top:127px;width:190px;height:27px"></div>
<svg class="a" style="left:1708px;top:127px" width="190" height="54" viewBox="0 0 190 54">
 <rect x="9.400" y="8.200" width="11.600" height="11.600" rx="1.500" fill="none" stroke="#84b88a" stroke-width="1.100"/>
 <path d="M35.600 13.500V10.300a3.400 3.400 0 0 1 6.800 0V13.500" fill="none" stroke="#5c5c5c" stroke-width="2.300"/><rect x="32.200" y="12.800" width="13.600" height="8.600" rx="1" fill="#5c5c5c"/><circle cx="39" cy="16" r="1.500" fill="#b4e6ba"/><rect x="38.300" y="16" width="1.400" height="3.200" fill="#b4e6ba"/>
 <path d="M55.400 10.900h11.300l-5.650 6.100z" fill="#444"/>
 <text x="77.500" y="17.500" font-family="Liberation Sans, sans-serif" font-size="12" fill="#333" letter-spacing="0.700">obj1</text>
 <g fill="#f4f4f4" stroke="#777" stroke-width="0.800"><ellipse cx="9.600" cy="40.800" rx="4.400" ry="7.200"/><ellipse cx="20.300" cy="40.800" rx="4.400" ry="7.200"/></g><ellipse cx="9" cy="41.400" rx="2.100" ry="3.300" fill="#666"/><ellipse cx="19.700" cy="41.400" rx="2.100" ry="3.300" fill="#666"/><circle cx="8.300" cy="40.300" r="0.700" fill="#ddd"/><circle cx="19" cy="40.300" r="0.700" fill="#ddd"/>
 <rect x="33.300" y="35.300" width="11.600" height="11.600" rx="1.500" fill="#eeeeee" stroke="#a8a8a8" stroke-width="1.100"/>
 <path d="M55.400 38.100h11.300l-5.650 6.100z" fill="#444"/>
 <text x="77.500" y="44.500" font-family="Liberation Sans, sans-serif" font-size="12" fill="#333" letter-spacing="0.700">obj2</text>
</svg>
<div class="a sbar" style="top:126px;height:399px;border-top:1px solid #bcbcbc"><div class="sarr" style="top:0"><svg width="18" height="19" viewBox="0 0 18 19"><path d="M9 6l6 7h-12z" fill="#ececec"/></svg></div><div class="sarr" style="bottom:0"><svg width="18" height="19" viewBox="0 0 18 19"><path d="M9 14l6 -7h-12z" fill="#ececec"/></svg></div></div>
<!-- material panel -->
<div class="a rhead" style="top:533px;height:19px">材質<svg class="a" style="right:3px;top:3px" width="14" height="14" viewBox="0 0 14 14"><path d="M1.500 1.500l11 11M12.500 1.500l-11 11" stroke="#fff" stroke-width="2"/></svg></div>
<div class="rb" style="left:1707px;top:553px;width:70px">新規</div><div class="rb" style="left:1778px;top:553px;width:69px">複製</div><div class="rb" style="left:1848px;top:553px;width:69px">削除</div>
<div class="rb" style="left:1707px;top:579px;width:70px">設定</div><div class="rb" style="left:1778px;top:579px;width:69px;background:#dcdcdc;border-color:#d0d0d0"></div><div class="rb" style="left:1848px;top:579px;width:69px">他</div>
<div class="a list" style="top:604px;height:404px"></div>
<div class="a sel" style="left:1708px;top:660px;width:190px;height:27px"></div>
<svg class="a" style="left:1708px;top:605px" width="190" height="82" viewBox="0 0 190 82">
 <g fill="#fff" stroke="#111" stroke-width="1.600"><rect x="5.800" y="5.800" width="17.400" height="17.400"/><rect x="5.800" y="32.800" width="17.400" height="17.400"/><rect x="5.800" y="59.800" width="17.400" height="17.400"/></g>
 <g font-family="Liberation Sans, sans-serif" font-size="12" fill="#333" letter-spacing="0.7"><text x="32" y="18.500">mat1</text><text x="32" y="45.500">mat2</text><text x="32" y="72.500">mat3</text></g>
</svg>
<div class="a sbar" style="top:604px;height:404px;border-top:1px solid #bcbcbc"><div class="sarr" style="top:0"><svg width="18" height="19" viewBox="0 0 18 19"><path d="M9 6l6 7h-12z" fill="#ececec"/></svg></div><div class="sarr" style="bottom:0"><svg width="18" height="19" viewBox="0 0 18 19"><path d="M9 14l6 -7h-12z" fill="#ececec"/></svg></div></div>
</body>
</html>
